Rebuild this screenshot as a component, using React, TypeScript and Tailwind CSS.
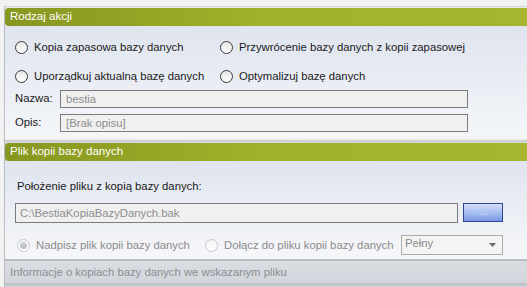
import React from "react";

const font = { fontFamily: '"Liberation Sans", Arial, sans-serif' };

function Radio({ label, disabled, checked }: { label: string; disabled?: boolean; checked?: boolean }) {
  return (
    <div className="flex items-center h-[20px]">
      <span
        className={
          "w-[13px] h-[13px] rounded-full border flex items-center justify-center shrink-0 " +
          (disabled
            ? "border-[#c4c8cc] bg-gradient-to-b from-[#f4f4f4] to-[#ffffff]"
            : "border-[#3a3a3a] bg-gradient-to-b from-[#e6e6e6] to-[#ffffff]")
        }
      >
        {checked && <span className="w-[7px] h-[7px] rounded-full bg-gradient-to-b from-[#d0d3d6] to-[#b8bcc0]" />}
      </span>
      <span className={"ml-[6px] text-[11.3px] whitespace-nowrap " + (disabled ? "text-[#8c8c8c]" : "text-[#1a1a1a]")}>
        {label}
      </span>
    </div>
  );
}

function Header({ title }: { title: string }) {
  return (
    <div className="h-[18px] rounded-l-[4px] bg-gradient-to-r from-[#87961f] via-[#a2b12b] to-[#a6b52e] flex items-center pl-[5px] text-white text-[11.5px]">
      {title}
    </div>
  );
}

export default function App() {
  return (
    <div style={font} className="w-[527px] h-[287px] overflow-hidden bg-[#f2f2f2] pt-[6px] pl-[4px] flex flex-col">
      <div className="flex-1 border-l border-[#b9bcc0] flex flex-col bg-[#c9ced6]">
        {/* Section 1 */}
        <div className="border-t border-[#d6d8db] pt-[1px] bg-[#e7eaef]">
          <Header title="Rodzaj akcji" />
          <div className="bg-gradient-to-b from-[#dfe4ee] to-[#f4f6f9] pl-[10px] pt-[11px] pb-[7px] flex flex-col">
            <div className="flex">
              <div className="w-[205px]">
                <Radio label="Kopia zapasowa bazy danych" />
              </div>
              <Radio label="Przywrócenie bazy danych z kopii zapasowej" />
            </div>
            <div className="flex mt-[9px]">
              <div className="w-[205px]">
                <Radio label="Uporządkuj aktualną bazę danych" />
              </div>
              <Radio label="Optymalizuj bazę danych" />
            </div>
            <div className="flex items-center mt-[4px] h-[18px]">
              <span className="w-[45px] text-[11.3px] text-[#1a1a1a] -mt-[2px]">Nazwa:</span>
              <div className="w-[408px] h-[18px] border border-[#7c7c7c] bg-[#f0f0f0] text-[11.3px] text-[#8e8e8e] pl-[5px] flex items-center">
                bestia
              </div>
            </div>
            <div className="flex items-center mt-[6px] h-[18px]">
              <span className="w-[45px] text-[11.3px] text-[#1a1a1a] -mt-[2px]">Opis:</span>
              <div className="w-[408px] h-[18px] border border-[#7c7c7c] bg-[#f0f0f0] text-[11.3px] text-[#8e8e8e] pl-[5px] flex items-center">
                [Brak opisu]
              </div>
            </div>
          </div>
        </div>
        {/* separator */}
        <div className="h-[4px] bg-gradient-to-b from-[#f3f4f6] via-[#c6c9cd] to-[#dde0e4]" />
        {/* Section 2 */}
        <div>
          <Header title="Plik kopii bazy danych" />
          <div className="bg-gradient-to-b from-[#dfe4ee] to-[#f6f7f9] pl-[10px] pt-[17px] pb-[4px] flex flex-col">
            <div className="h-[16px] flex items-center pl-[2px] text-[11.3px] text-[#1a1a1a]">
              Położenie pliku z kopią bazy danych:
            </div>
            <div className="flex mt-[9px] h-[20px]">
              <div className="w-[443px] h-[20px] border border-[#7c7c7c] bg-[#f0f0f0] text-[11.3px] text-[#8e8e8e] pl-[4px] flex items-center">
                C:\BestiaKopiaBazyDanych.bak
              </div>
              <div className="ml-[5px] w-[40px] h-[19px] border border-[#2a4790] bg-gradient-to-b from-[#d3def8] via-[#a8c0f2] to-[#7896e4] flex items-center justify-center text-[10px] text-[#e8eeff] leading-none pb-[2px]">
                ...
              </div>
            </div>
            <div className="flex items-center mt-[12px] h-[20px] pl-[2px]">
              <div className="w-[188px]">
                <Radio label="Nadpisz plik kopii bazy danych" disabled checked />
              </div>
              <div className="w-[196px]">
                <Radio label="Dołącz do pliku kopii bazy danych" disabled />
              </div>
              <div className="w-[102px] h-[20px] border border-[#ababab] bg-[#f4f4f4] flex items-center justify-between pl-[3px] pr-[6px] text-[11.3px] text-[#8a8a8a]">
                <span className="-mt-[3px]">Pełny</span>
                <svg width="7" height="4" viewBox="0 0 7 4">
                  <path d="M0 0 H7 L3.5 4 Z" fill="#6a6a6a" />
                </svg>
              </div>
            </div>
          </div>
        </div>
        {/* footer */}
        <div className="h-[2px] bg-[#b8bdc4]" />
        <div className="h-[22px] bg-gradient-to-b from-[#dadde2] to-[#d2d6dc] flex items-center pl-[5px] text-[11.3px] text-[#8a8d92]">
          Informacje o kopiach bazy danych we wskazanym pliku
        </div>
        <div className="h-[2px] bg-[#bfc4cb]" />
      </div>
    </div>
  );
}
